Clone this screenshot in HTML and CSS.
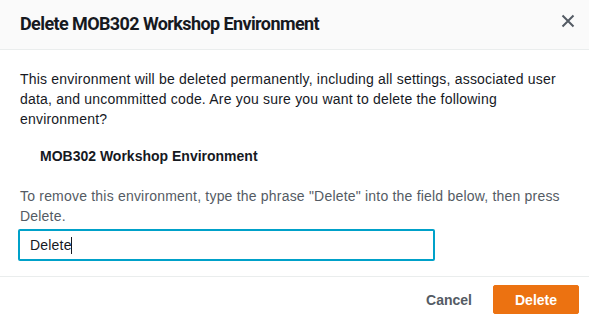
FILE: index.html
```html
<!DOCTYPE html>
<html>
<head>
  <title>Delete environment</title>
  <link rel="stylesheet" href="styles.css">
</head>
<body>
  <div class="modal">
    <!-- Header -->
    <div class="modal-header">
      <div class="modal-title">Delete MOB302 Workshop Environment</div>
      <button class="close-btn" aria-label="Close">
        <svg width="14" height="14" viewBox="0 0 14 14">
          <path d="M1.5 1.5 L12.5 12.5 M12.5 1.5 L1.5 12.5" stroke="#545b64" stroke-width="2" fill="none"/>
        </svg>
      </button>
    </div>

    <!-- Body -->
    <div class="modal-body">
      <p class="warning">This environment will be deleted permanently, including all settings, associated user data, and uncommitted code. Are you sure you want to delete the following environment?</p>
      <div class="env-name">MOB302 Workshop Environment</div>
      <label class="hint" for="confirm">To remove this environment, type the phrase "Delete" into the field below, then press Delete.</label>
      <div class="input-wrap">
        <input id="confirm" type="text" value="Delete">
        <span class="caret"></span>
      </div>
    </div>

    <!-- Footer -->
    <div class="modal-footer">
      <button class="btn-link">Cancel</button>
      <button class="btn-primary">Delete</button>
    </div>
  </div>
</body>
</html>
```

FILE: styles.css
```css
/* Base Styles */
body, html {
  margin: 0;
  padding: 0;
  background: #fff;
  font-family: 'Liberation Sans', Arial, sans-serif;
  color: #16191f;
  overflow: hidden;
}

.modal {
  width: 589px;
}

/* Header */
.modal-header {
  display: flex;
  align-items: center;
  justify-content: space-between;
  height: 49px;
  padding: 0 14px 0 20px;
  background: #fafafa;
  border-bottom: 1px solid #eaeded;
  box-sizing: content-box;
}

.modal-title {
  font-family: Roboto, 'Liberation Sans', sans-serif;
  font-size: 18px;
  font-weight: bold;
  line-height: 22px;
  letter-spacing: -0.6px;
  margin-top: -2px;
}

.close-btn {
  border: none;
  background: none;
  padding: 0;
  width: 14px;
  height: 14px;
  margin-top: -8px;
  cursor: pointer;
  display: flex;
}

/* Body */
.modal-body {
  padding: 19px 20px 0 20px;
  font-size: 14px;
  line-height: 20px;
  letter-spacing: 0.2px;
}

.warning {
  margin: 0;
}

.env-name {
  font-weight: bold;
  letter-spacing: 0;
  margin: 17px 0 0 20px;
}

.hint {
  display: block;
  margin-top: 20px;
  color: #545b64;
}

.input-wrap {
  position: relative;
  width: 417px;
  margin: 3px 0 0 -2px;
}

.input-wrap input {
  width: 100%;
  height: 32px;
  box-sizing: border-box;
  padding: 0 10px;
  border: 2px solid #00a1c9;
  border-radius: 2px;
  font-family: 'Liberation Sans', Arial, sans-serif;
  font-size: 14px;
  letter-spacing: 0.2px;
  color: #16191f;
  outline: none;
}

.caret {
  position: absolute;
  left: 53px;
  top: 8px;
  width: 1px;
  height: 17px;
  background: #16191f;
}

/* Footer */
.modal-footer {
  display: flex;
  justify-content: flex-end;
  align-items: center;
  gap: 21px;
  margin-top: 15px;
  padding: 8px 10px 0 20px;
  border-top: 1px solid #eaeded;
}

.btn-link {
  border: none;
  background: none;
  font-family: 'Liberation Sans', Arial, sans-serif;
  font-size: 14px;
  font-weight: bold;
  color: #545b64;
  padding: 0;
}

.btn-primary {
  width: 86px;
  height: 29px;
  border: 1px solid #ec7211;
  border-radius: 2px;
  background: #ec7211;
  color: #fff;
  font-family: 'Liberation Sans', Arial, sans-serif;
  font-size: 14px;
  font-weight: bold;
}
```
